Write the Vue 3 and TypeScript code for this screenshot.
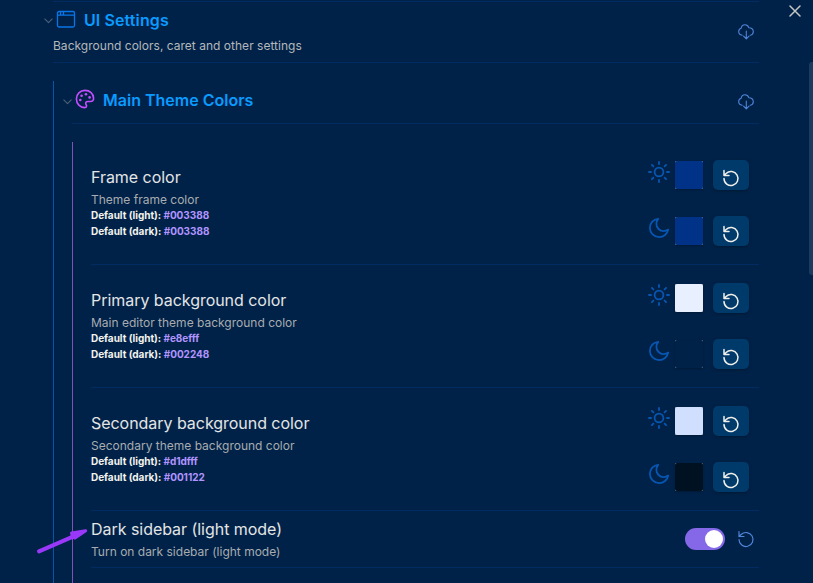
<script setup lang="ts">
interface ColorSetting {
  name: string
  description: string
  light: string
  dark: string
}

const colorSettings: ColorSetting[] = [
  { name: 'Frame color', description: 'Theme frame color', light: '#003388', dark: '#003388' },
  { name: 'Primary background color', description: 'Main editor theme background color', light: '#e8efff', dark: '#002248' },
  { name: 'Secondary background color', description: 'Secondary theme background color', light: '#d1dfff', dark: '#001122' },
]

const modes = ['light', 'dark'] as const
</script>

<template>
  <div class="panel">
    <main class="content">
      <header class="heading root-heading">
        <div>
          <div class="title-line">
            <svg class="chevron" viewBox="0 0 8 5"><path d="M.7.7 4 4 7.3.7" /></svg>
            <svg class="title-icon window" viewBox="0 0 20 20">
              <rect x="1.5" y="2.5" width="17" height="15.500" rx="1.5" />
              <path d="M1.5 6.200h17M4.500 2.500v3.700M7.500 2.500v3.700" />
            </svg>
            <h1>UI Settings</h1>
          </div>
          <p class="summary">Background colors, caret and other settings</p>
        </div>
        <svg class="cloud" viewBox="0 0 16 16">
          <path d="M4.2 11.3C2 11 .7 9.600.7 7.600.7 5.800 1.700 4.500 3.200 4.200 3.500 2.100 4.900.8 6.900.8c1.900 0 3.300 1.100 3.900 2.900 2.700-.1 4.500 1.500 4.500 3.900 0 2-1.100 3.400-3 3.700M8.300 7v7.800M5.600 12.100l2.700 2.800 2.700-2.800" />
        </svg>
      </header>

      <section class="level-one">
        <header class="heading sub-heading">
          <div class="title-line">
            <svg class="chevron" viewBox="0 0 8 5"><path d="M.7.7 4 4 7.3.7" /></svg>
            <svg class="title-icon palette" viewBox="0 0 20 20">
              <path d="M10 1.400c-4.900 0-8.600 3.700-8.600 8.600s3.700 8.600 8.400 8.600c1.200 0 1.800-.7 1.800-1.500 0-1.200-.9-1.500-.9-2.700 0-1.200.9-1.900 2-1.900h2.600c2.100 0 3.300-1.400 3.300-3.300 0-4.400-3.800-7.800-8.600-7.800Z" />
              <g class="dots"><circle cx="5.300" cy="11" r="1.300" /><circle cx="6.600" cy="6.700" r="1.300" /><circle cx="11" cy="5.300" r="1.300" /><circle cx="14.600" cy="8.400" r="1.300" /></g>
            </svg>
            <h2>Main Theme Colors</h2>
          </div>
          <svg class="cloud" viewBox="0 0 16 16">
            <path d="M4.2 11.3C2 11 .7 9.600.7 7.600.7 5.800 1.700 4.500 3.200 4.200 3.500 2.100 4.900.8 6.900.8c1.900 0 3.300 1.100 3.900 2.900 2.700-.1 4.500 1.500 4.500 3.900 0 2-1.100 3.400-3 3.700M8.300 7v7.800M5.600 12.100l2.700 2.800 2.700-2.800" />
          </svg>
        </header>

        <div class="level-two">
          <article v-for="item in colorSettings" :key="item.name" class="setting color-setting">
            <div class="info">
              <h3>{{ item.name }}</h3>
              <p class="description">{{ item.description }}</p>
              <p v-for="mode in modes" :key="mode" class="default">Default ({{ mode }}): <span>{{ item[mode] }}</span></p>
            </div>
            <div class="pickers">
              <div v-for="mode in modes" :key="mode" class="picker">
                <svg v-if="mode === 'light'" class="mode-icon" viewBox="0 0 22 22">
                  <circle cx="11" cy="11" r="4.400" />
                  <path d="M11 1v2M11 19v2M1 11h2M19 11h2M3.900 3.900l1.500 1.500M16.600 16.600l1.500 1.500M3.900 18.100l1.500-1.500M16.600 5.400l1.500-1.500" />
                </svg>
                <svg v-else class="mode-icon" viewBox="0 0 22 22">
                  <path d="M10.200 1.800C5.500 2.200 1.900 6.100 1.900 10.900c0 5.100 4.100 9.200 9.200 9.200 4.500 0 8.300-3.200 9.100-7.500-1.400 1-2.900 1.500-4.500 1.500-4.100 0-7.300-3.200-7.300-7.200 0-1.900.6-3.700 1.800-5.100Z" />
                </svg>
                <span class="swatch"><span class="swatch-fill" :style="{ background: item[mode] }"></span></span>
                <button class="reset" type="button">
                  <svg class="restore" viewBox="0 0 18 18"><path d="M2 9.500a7 7 0 1 0 2.100-5L2 6.500M2 1.500v5h5" /></svg>
                </button>
              </div>
            </div>
          </article>

          <article class="setting toggle-setting">
            <div class="info">
              <h3>Dark sidebar (light mode)</h3>
              <p class="description">Turn on dark sidebar (light mode)</p>
            </div>
            <div class="toggle-controls">
              <span class="toggle"><span class="knob"></span></span>
              <svg class="restore" viewBox="0 0 18 18"><path d="M2 9.500a7 7 0 1 0 2.100-5L2 6.500M2 1.500v5h5" /></svg>
            </div>
          </article>
        </div>
      </section>
    </main>

    <svg class="close" viewBox="0 0 12 12"><path d="M1 1l10 10M11 1 1 11" /></svg>
    <div class="scrollbar"></div>
    <svg class="arrow" viewBox="0 0 54 28">
      <path class="shaft" d="M3 23.300 37 8.600" />
      <path class="head" d="M35.500 5 49.700 2.700 39 10 36.500 9Z" />
    </svg>
  </div>
</template>

<style>
body {
  margin: 0;
  background: #002248;
}
</style>

<style scoped>
.panel {
  position: relative;
  box-sizing: border-box;
  width: 813px;
  height: 583px;
  padding: 1px 54px 0 53px;
  overflow: hidden;
  background: #002248;
  color: #e4e5e6;
  font-family: Inter, "Liberation Sans", sans-serif;
}

h1, h2, h3, p {
  margin: 0;
}

svg {
  display: block;
  flex: none;
  fill: none;
  stroke: currentColor;
  stroke-linecap: round;
  stroke-linejoin: round;
}

.heading {
  display: flex;
  box-sizing: border-box;
  justify-content: space-between;
  border-bottom: 1px solid #002c62;
}

.root-heading {
  height: 62px;
  align-items: center;
  border-top: 1px solid #002c62;
  padding-right: 5px;
}

.title-line {
  display: flex;
  align-items: center;
  height: 24px;
  margin-left: -9px;
}

.root-heading .title-line {
  margin-top: 3px;
}

h1, h2 {
  color: #0a9bff;
  font-size: 16px;
  font-weight: 600;
  line-height: 24px;
}

h1 {
  margin-top: 1px;
  letter-spacing: 0.1px;
}

.chevron {
  width: 9px;
  height: 6px;
  margin: 3px 3px 0 0;
  color: #4c6078;
  stroke-width: 1;
}

.title-icon {
  width: 20px;
  height: 20px;
  margin-right: 8px;
}

.window {
  margin-top: -1px;
  color: #0876e8;
  stroke-width: 1.3;
}

.palette {
  margin-top: -2px;
  color: #c44dff;
  stroke-width: 1.6;
}

.dots {
  fill: currentColor;
  stroke: none;
}

.summary {
  margin: 4px 0 4px;
  color: #b4b8bc;
  font-size: 12px;
  letter-spacing: 0.02px;
  line-height: 20px;
}

.cloud {
  width: 16px;
  height: 16px;
  color: #5084d8;
  stroke-width: 1.1;
}

.level-one {
  margin-top: 18px;
  height: 502px;
  padding-left: 18px;
  border-left: 1px solid #0755a8;
}

.sub-heading {
  height: 43px;
  padding: 7px 5px 0 0;
}

.sub-heading .cloud {
  margin-top: 6px;
}

.level-two {
  height: 441px;
  margin-top: 18px;
  padding-left: 18px;
  border-left: 1px solid #8450b4;
}

.setting {
  display: flex;
  box-sizing: border-box;
  justify-content: space-between;
  border-bottom: 1px solid #002c62;
}

.color-setting {
  height: 123px;
  padding: 18px 10px 0 0;
}

.color-setting .info {
  padding-top: 5px;
}

h3 {
  font-size: 16px;
  font-weight: 400;
  letter-spacing: -0.04px;
  line-height: 24px;
}

.description {
  margin-bottom: -2px;
  padding-top: 2px;
  color: #a8acb0;
  font-size: 12px;
  line-height: 18px;
}

.default {
  color: #f3f3ee;
  font-size: 10px;
  font-weight: 700;
  letter-spacing: -0.03px;
  line-height: 16px;
}

.default span {
  color: #b294ff;
}

.pickers {
  display: flex;
  flex-direction: column;
  gap: 26px;
}

.picker {
  display: flex;
  align-items: center;
  height: 30px;
}

.mode-icon {
  width: 22px;
  height: 22px;
  margin: -6px 5px 0 0;
  color: #0756b2;
  stroke-width: 1.8;
}

.swatch {
  width: 28px;
  height: 28px;
  margin-right: 10px;
  background: #60718a;
  box-shadow: 0 1px 2px #00112266;
}

.swatch-fill {
  display: block;
  height: 28px;
  border-radius: 2px;
}

.reset {
  display: flex;
  box-sizing: border-box;
  width: 36px;
  height: 30px;
  justify-content: center;
  padding: 9px 0 0;
  border: 0;
  border-radius: 5px;
  background: #003a6b;
  box-shadow: 0 1px 3px #00112288;
  color: #f0efe9;
}

.restore {
  width: 18px;
  height: 18px;
  stroke-width: 1.5;
}

.toggle-setting {
  height: 57px;
  padding: 6px 4px 0 0;
}

.toggle-controls {
  display: flex;
  align-items: center;
  gap: 12px;
  height: 44px;
}

.toggle {
  display: flex;
  box-sizing: border-box;
  width: 40px;
  height: 22px;
  justify-content: flex-end;
  padding: 2px;
  border-radius: 11px;
  background: #8568e8;
}

.knob {
  width: 18px;
  height: 18px;
  border-radius: 50%;
  background: #fff;
}

.toggle-controls .restore {
  margin-top: -1px;
  color: #5084d8;
  stroke-width: 1.2;
}

.close {
  position: absolute;
  top: 5px;
  right: 12px;
  width: 12px;
  height: 12px;
  color: #c4c5c5;
  stroke-width: 1.5;
}

.scrollbar {
  position: absolute;
  top: 62px;
  right: 0;
  width: 4px;
  height: 213px;
  border-radius: 3px 0 0 3px;
  background: #1b3a5d;
}

.arrow {
  position: absolute;
  top: 528px;
  left: 36px;
  width: 54px;
  height: 28px;
  color: #9a38fa;
}

.shaft {
  stroke-width: 4;
}

.head {
  fill: currentColor;
  stroke-width: 3;
}
</style>
